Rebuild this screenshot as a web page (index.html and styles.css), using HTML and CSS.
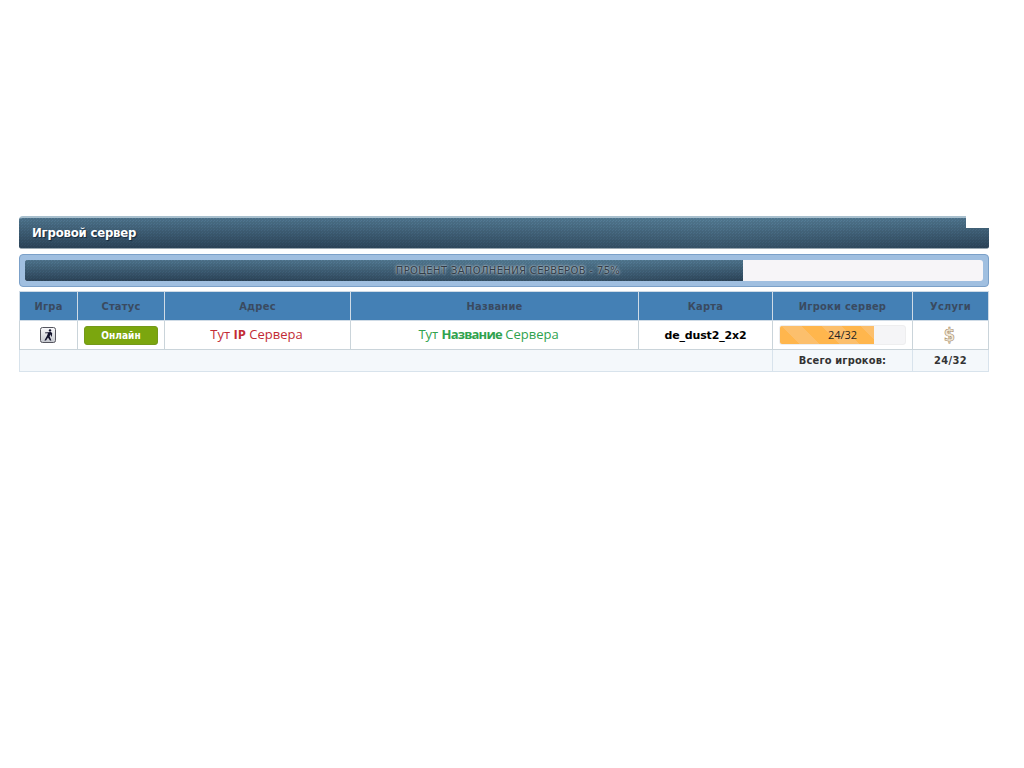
FILE: index.html
```html
<!DOCTYPE html>
<html lang="ru">

<head>
    <meta charset="UTF-8">
    <title>Игровой сервер</title>
    <link rel="stylesheet" href="styles.css">
</head>

<body>
    <div class="monitor">
        <div class="title-bar">Игровой сервер</div>

        <div class="fill-box">
            <div class="fill-track">
                <div class="fill-bar" style="width: 74.9%"></div>
                <span class="fill-label">ПРОЦЕНТ ЗАПОЛНЕНИЯ СЕРВЕРОВ - 75%</span>
            </div>
        </div>

        <table class="servers">
            <colgroup>
                <col class="c-game">
                <col class="c-status">
                <col class="c-addr">
                <col class="c-name">
                <col class="c-map">
                <col class="c-players">
                <col class="c-services">
            </colgroup>
            <thead>
                <tr>
                    <th>Игра</th>
                    <th>Статус</th>
                    <th>Адрес</th>
                    <th>Название</th>
                    <th>Карта</th>
                    <th>Игроки сервер</th>
                    <th>Услуги</th>
                </tr>
            </thead>
            <tbody>
                <tr>
                    <td>
                        <svg class="game-icon" width="16" height="16" viewBox="0 0 16 16">
                            <defs>
                                <linearGradient id="icon-bg" x1="0" y1="0" x2="0" y2="1">
                                    <stop offset="0" stop-color="#fafafc"/>
                                    <stop offset="1" stop-color="#c4c7cd"/>
                                </linearGradient>
                            </defs>
                            <rect x="0.5" y="0.5" width="15" height="15" rx="2" fill="url(#icon-bg)" stroke="#55555e"/>
                            <circle cx="10" cy="3.4" r="1.2" fill="#10102a"/>
                            <path d="M5 5.4 L11 4.9 L12.2 6.2 L11.8 9.4 L11 9.4 L10.7 7.2 L9.6 9.2 L11.4 13.6 L10 13.6 L8 10.4 L6 13.6 L4.4 13.6 L7 8.8 L8 6.2 L5 6.2 Z" fill="#10102a"/>
                        </svg>
                    </td>
                    <td><span class="status-online">Онлайн</span></td>
                    <td class="addr">Тут <b>IP</b> Сервера</td>
                    <td class="name">Тут <b>Название</b> Сервера</td>
                    <td class="map">de_dust2_2x2</td>
                    <td>
                        <div class="players-track">
                            <div class="players-bar" style="width: 75%"></div>
                            <span class="players-label">24/32</span>
                        </div>
                    </td>
                    <td><span class="dollar">$</span></td>
                </tr>
            </tbody>
            <tfoot>
                <tr>
                    <td colspan="5" class="foot-empty"></td>
                    <td class="foot-text">Всего игроков:</td>
                    <td class="foot-text foot-count">24/32</td>
                </tr>
            </tfoot>
        </table>
    </div>
</body>

</html>
```

FILE: styles.css
```css
body {
    margin: 0;
    background: #fff;
    font-family: "DejaVu Sans", sans-serif;
}

.monitor {
    width: 970px;
    margin: 216px 0 0 19px;
}

/* dotted texture used on both dark bars */
.title-bar,
.fill-bar {
    background-color: #3c5b73;
    background-image:
        radial-gradient(circle at 1px 1px, rgba(0, 0, 0, 0.09) 1px, transparent 1.2px),
        radial-gradient(circle at 2.5px 2.5px, rgba(0, 0, 0, 0.09) 1px, transparent 1.2px),
        linear-gradient(90deg, rgba(255, 255, 255, 0) 30%, rgba(120, 170, 195, 0.18) 72%, rgba(255, 255, 255, 0) 100%),
        linear-gradient(#527a94, #2e475d);
    background-size: 3px 3px, 3px 3px, auto, auto;
}

.title-bar {
    position: relative;
    box-sizing: border-box;
    height: 33px;
    padding-left: 13px;
    border-top: 2px solid #a9c0ce;
    border-bottom: 1px solid #9aa7b0;
    border-radius: 4px 0 3px 3px;
    color: #fff;
    font: bold 13px/29px "DejaVu Sans Condensed", "DejaVu Sans", sans-serif;
    letter-spacing: -0.2px;
    text-shadow: 1px 1px 1px #16283a;
}

.title-bar::after {
    content: "";
    position: absolute;
    top: -2px;
    right: 0;
    width: 23px;
    height: 12px;
    background: #fff;
}

.fill-box {
    box-sizing: border-box;
    height: 33px;
    margin-top: 5px;
    padding: 5px;
    background: #a0bfe0;
    border: 1px solid #7ba0c8;
    border-radius: 4px;
}

.fill-track {
    position: relative;
    height: 21px;
    background: #f7f5f8;
    border-radius: 3px;
    overflow: hidden;
}

.fill-bar {
    height: 100%;
}

.fill-label {
    position: absolute;
    top: 0;
    left: 8px;
    right: 0;
    text-align: center;
    font: 10px/21px "DejaVu Sans", sans-serif;
    letter-spacing: 0.35px;
    color: #323c46;
    text-shadow: 0 0 3px #d0dae0, 0 0 2px #9fb0bc;
}

.servers {
    width: 969px;
    margin-top: 4px;
    border-collapse: collapse;
    table-layout: fixed;
}

.c-game { width: 58px; }
.c-status { width: 87px; }
.c-addr { width: 186px; }
.c-name { width: 288px; }
.c-map { width: 134px; }
.c-players { width: 140px; }
.c-services { width: 76px; }

.servers th {
    height: 28px;
    padding: 0;
    background: #4480b5;
    border: 1px solid #cfdbe6;
    color: #3a4a60;
    font: bold 11px "DejaVu Sans Condensed", "DejaVu Sans", sans-serif;
    letter-spacing: 0.25px;
    text-align: center;
}

.servers td {
    height: 28px;
    padding: 0;
    background: #fff;
    border: 1px solid #cad4da;
    text-align: center;
    vertical-align: middle;
}

.game-icon {
    display: block;
    margin: 0 0 0 20px;
}

.status-online {
    display: block;
    width: 74px;
    height: 19px;
    margin: 0 auto;
    background: #7ba60e;
    border: 1px solid #74991a;
    box-sizing: border-box;
    border-radius: 3px;
    color: #fff;
    font: bold 10px/17px "DejaVu Sans Condensed", "DejaVu Sans", sans-serif;
    letter-spacing: 0.1px;
}

.servers .addr,
.servers .name {
    height: 26px;
    padding-bottom: 2px;
    font: 13px "Open Sans", sans-serif;
}

.servers .addr {
    padding-right: 2px;
    color: #c22b35;
}

.servers .name {
    padding-right: 12px;
    color: #2fa24e;
}

.name b {
    letter-spacing: -0.8px;
}

.map {
    font: bold 11px "DejaVu Sans", sans-serif;
    letter-spacing: -0.15px;
    color: #000;
}

.players-track {
    position: relative;
    width: 127px;
    height: 20px;
    margin: 0 auto;
    background: #f5f5f7;
    border: 1px solid #eeeeef;
    box-sizing: border-box;
    border-radius: 3px;
    overflow: hidden;
}

.players-bar {
    height: 100%;
    background: repeating-linear-gradient(45deg, #ffb64d 0, #ffb64d 14px, #fcbf6c 14px, #fcbf6c 28px);
}

.players-label {
    position: absolute;
    top: 0;
    left: 0;
    right: 0;
    font: 11px/18px "Open Sans", sans-serif;
    color: #222;
}

.dollar {
    display: block;
    padding-right: 2px;
    color: #f3ead9;
    font: bold 18px/20px "DejaVu Sans Condensed", "DejaVu Sans", sans-serif;
    -webkit-text-stroke: 0.6px #a58a68;
}

.servers tfoot td {
    height: 21px;
    background: #f4f8fb;
    border-color: #d8e3ec;
}

.foot-text {
    color: #333;
    font: bold 11px "DejaVu Sans Condensed", "DejaVu Sans", sans-serif;
    letter-spacing: 0.15px;
}

.foot-count {
    letter-spacing: 0.4px;
}
```
